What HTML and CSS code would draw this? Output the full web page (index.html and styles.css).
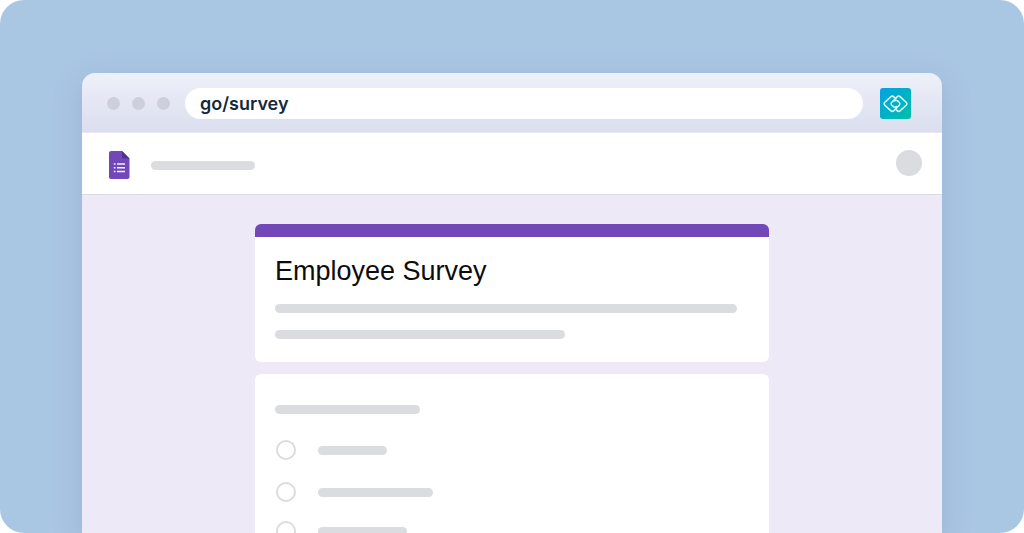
FILE: index.html
```html
<!DOCTYPE html>
<html lang="en">
<head>
<meta charset="utf-8">
<meta name="viewport" content="width=device-width, initial-scale=1">
<title>Employee Survey</title>
<link rel="stylesheet" href="styles.css">
</head>
<body>
<div class="stage">
  <div class="window">
    <div class="toolbar">
      <div class="dots"><span class="dot"></span><span class="dot"></span><span class="dot"></span></div>
      <input class="address" type="text" value="go/survey" aria-label="Address" spellcheck="false">
      <button class="extension" type="button" aria-label="Go links">
        <svg viewBox="0 0 31 31" width="31" height="31" fill="none" stroke="#dcf8fc" stroke-width="1.5" stroke-linejoin="round" stroke-linecap="round">
          <path d="M15.500 10.500L13.900 8.900Q12.300 7.300 10.700 8.900L4.600 14.500Q3.400 15.700 4.600 17L10.700 22.600Q12.300 24.200 13.900 22.600L19.400 17Q20.600 15.700 19.400 14.500L17.600 12.900Q16 11.600 14.600 13"/>
          <path d="M15.500 21L17.100 22.600Q18.700 24.200 20.300 22.600L26.400 17Q27.600 15.800 26.400 14.500L20.300 8.900Q18.700 7.300 17.100 8.900L11.600 14.500Q10.400 15.800 11.600 17L13.400 18.600Q15 19.900 16.400 18.500"/>
        </svg>
      </button>
    </div>
    <header class="app-header">
      <svg class="form-icon" viewBox="0 0 21 28" width="21" height="28">
        <path fill="#7248b9" d="M2 0H13L20.500 7.500V26Q20.500 28 18.500 28H2Q0 28 0 26V2Q0 0 2 0Z"/>
        <path fill="#513092" d="M13 0L20.500 7.500H14.500Q13 7.500 13 6Z"/>
        <path stroke="#f4effb" stroke-width="1.400" d="M8 13H16M8 16.800H16M8 20.500H16M4.800 13H6.500M4.800 16.800H6.500M4.800 20.500H6.500"/>
      </svg>
      <span class="bar bar-name"></span>
      <button class="avatar" type="button" aria-label="Account"></button>
    </header>
    <main class="page">
      <section class="card title-card">
        <h1 class="title">Employee Survey</h1>
        <span class="bar bar-long"></span>
        <span class="bar bar-medium"></span>
      </section>
      <section class="card question-card">
        <span class="bar bar-question"></span>
        <div class="options">
          <label class="option"><input class="radio" type="radio" name="answer" aria-label="Option 1"><span class="bar bar-a"></span></label>
          <label class="option"><input class="radio" type="radio" name="answer" aria-label="Option 2"><span class="bar bar-b"></span></label>
          <label class="option"><input class="radio" type="radio" name="answer" aria-label="Option 3"><span class="bar bar-c"></span></label>
        </div>
      </section>
    </main>
  </div>
</div>
</body>
</html>
```

FILE: styles.css
```css
* { box-sizing: border-box; }

body {
  margin: 0;
  background: #fff;
  font-family: "Liberation Sans", Arial, sans-serif;
}

.stage {
  display: flex;
  height: 100vh;
  padding: 73px 82px 0;
  overflow: hidden;
  border-radius: 24px;
  background: #a9c6e3;
}

.window {
  display: flex;
  flex: 1;
  flex-direction: column;
  min-width: 0;
  border-radius: 13px 13px 0 0;
  box-shadow: 0 8px 28px rgba(125, 140, 190, 0.32);
}

.toolbar {
  display: flex;
  align-items: center;
  flex: none;
  height: 60px;
  padding: 2px 31px 0 25px;
  border-bottom: 1px solid #ebe4f5;
  border-radius: 13px 13px 0 0;
  background: linear-gradient(#eef0f9, #dadeee);
}

.dots {
  display: flex;
  gap: 12px;
  margin-right: 15px;
}

.dot {
  width: 13px;
  height: 13px;
  border-radius: 50%;
  background: #cdd0dc;
}

.address {
  flex: 1;
  min-width: 0;
  height: 31px;
  margin-right: 17px;
  padding: 0 15px;
  border: 0;
  border-radius: 16px;
  background: #fff;
  color: #14293b;
  font: 600 18px Inter, "Liberation Sans", sans-serif;
}

.extension {
  display: flex;
  flex: none;
  width: 31px;
  height: 31px;
  padding: 0;
  border: 0;
  border-radius: 3px;
  background: linear-gradient(135deg, #00a3e5, #00bfa8);
}

.app-header {
  display: flex;
  align-items: center;
  flex: none;
  height: 62px;
  padding: 0 20px 0 27px;
  border-bottom: 1px solid #dcdce4;
  background: #fff;
}

.form-icon {
  flex: none;
  margin: 2px 21px 0 0;
}

.bar {
  display: block;
  height: 9px;
  max-width: 100%;
  border-radius: 5px;
  background: #dbdce0;
}

.bar-name { width: 104px; margin-top: 3px; }
.bar-long { width: 462px; }
.bar-medium { width: 290px; margin-top: 17px; }
.bar-question { width: 145px; }
.bar-a { width: 69px; }
.bar-b { width: 115px; }
.bar-c { width: 89px; }

.avatar {
  width: 26px;
  height: 26px;
  margin: 0 0 2px auto;
  padding: 0;
  border: 0;
  border-radius: 50%;
  background: #dbdce0;
}

.page {
  display: flex;
  flex: 1 0 auto;
  flex-direction: column;
  align-items: center;
  gap: 12px;
  padding: 29px 20px 0;
  background: #ede9f6;
}

.card {
  width: 100%;
  max-width: 514px;
  border-radius: 6px;
  background: #fff;
}

.title-card {
  padding: 18px 20px 23px;
  border-top: 13px solid #7248b9;
}

.title {
  margin: 0 0 17px;
  color: #0c0c0e;
  font-size: 27px;
  font-weight: 400;
  line-height: 32px;
}

.question-card { padding: 31px 20px 30px; }

.options { padding: 26px 0 0 1px; }

.option {
  display: flex;
  align-items: center;
  gap: 22px;
  margin-bottom: 22px;
}

.option:nth-last-child(2) { margin-bottom: 19px; }

.radio {
  flex: none;
  width: 20px;
  height: 20px;
  margin: 0;
  border: 2px solid #dbdce0;
  border-radius: 50%;
  background: #fff;
  appearance: none;
}

.radio:checked {
  border-color: #7248b9;
  box-shadow: inset 0 0 0 3px #fff;
  background: #7248b9;
}
```
